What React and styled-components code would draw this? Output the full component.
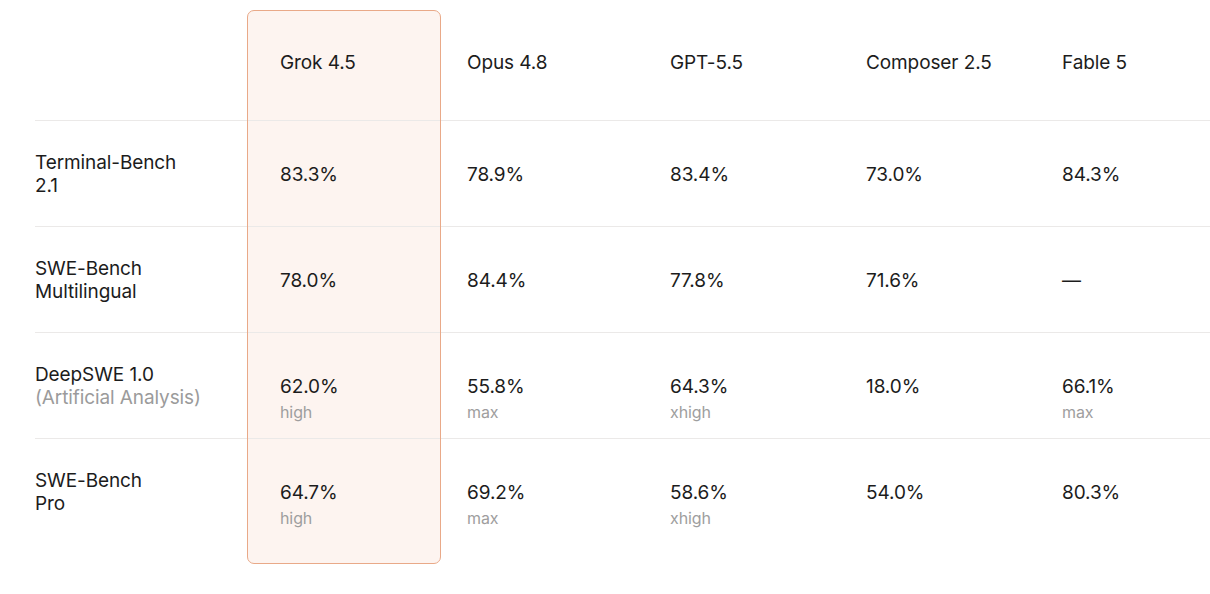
import React from 'react';
import styled, { createGlobalStyle } from 'styled-components';

const GlobalStyle = createGlobalStyle`
  body {
    margin: 0;
    padding: 0;
    background: #ffffff;
    font-family: Inter, 'Noto Sans', sans-serif;
    color: #1c1c1c;
  }
  * { box-sizing: border-box; }
`;

// --- Layout ---
const Table = styled.div`
  display: flex;
  align-items: flex-start;
  padding-left: 35px;
  width: 1210px;
`;

const Column = styled.div`
  display: flex;
  flex-direction: column;
  width: ${p => p.$width}px;
  flex-shrink: 0;
`;

const HighlightColumn = styled(Column)`
  margin-top: 10px;
  padding-bottom: 18px;
  background: #fdf4f0;
  border: 1px solid #e9a988;
  border-radius: 7px;
`;

const HeaderCell = styled.div`
  height: ${p => (p.$highlight ? 110 : 121)}px;
  padding-top: ${p => (p.$highlight ? 40 : 51)}px;
  padding-left: ${p => p.$pad}px;
  border-bottom: 1px solid #ebe9e8;
  font-size: 19px;
  line-height: 23px;
  letter-spacing: -0.1px;
`;

const BodyCell = styled.div`
  height: 106px;
  padding-top: ${p => (p.$label ? 30 : 42)}px;
  padding-left: ${p => p.$pad}px;
  border-bottom: ${p => (p.$last ? 'none' : '1px solid #ebe9e8')};
  font-size: 19px;
  line-height: 23px;
  letter-spacing: -0.1px;
`;

const Note = styled.div`
  color: #9b9b9b;
`;

const Effort = styled.div`
  margin-top: 4px;
  font-size: 16px;
  line-height: 20px;
  color: #9e9e9e;
`;

// --- Data ---
const BENCHMARKS = [
  { name: 'Terminal-Bench', second: '2.1' },
  { name: 'SWE-Bench', second: 'Multilingual' },
  { name: 'DeepSWE 1.0', note: '(Artificial Analysis)' },
  { name: 'SWE-Bench', second: 'Pro' },
];

const MODELS = [
  {
    name: 'Grok 4.5', width: 194, pad: 32, highlight: true,
    scores: [['83.3%'], ['78.0%'], ['62.0%', 'high'], ['64.7%', 'high']],
  },
  {
    name: 'Opus 4.8', width: 203, pad: 26,
    scores: [['78.9%'], ['84.4%'], ['55.8%', 'max'], ['69.2%', 'max']],
  },
  {
    name: 'GPT-5.5', width: 196, pad: 26,
    scores: [['83.4%'], ['77.8%'], ['64.3%', 'xhigh'], ['58.6%', 'xhigh']],
  },
  {
    name: 'Composer 2.5', width: 196, pad: 26,
    scores: [['73.0%'], ['71.6%'], ['18.0%'], ['54.0%']],
  },
  {
    name: 'Fable 5', width: 174, pad: 26,
    scores: [['84.3%'], ['—'], ['66.1%', 'max'], ['80.3%']],
  },
];

function ModelColumn({ model }) {
  const Wrapper = model.highlight ? HighlightColumn : Column;
  return (
    <Wrapper $width={model.width}>
      <HeaderCell $highlight={model.highlight} $pad={model.pad}>{model.name}</HeaderCell>
      {model.scores.map(([value, effort], i) => (
        <BodyCell key={i} $pad={model.pad} $last={i === model.scores.length - 1}>
          <div>{value}</div>
          {effort && <Effort>{effort}</Effort>}
        </BodyCell>
      ))}
    </Wrapper>
  );
}

export default function App() {
  return (
    <>
      <GlobalStyle />
      <Table>
        <Column $width={212}>
          <HeaderCell $pad={0} />
          {BENCHMARKS.map((b, i) => (
            <BodyCell key={i} $label $pad={0} $last={i === BENCHMARKS.length - 1}>
              <div>{b.name}</div>
              {b.second && <div>{b.second}</div>}
              {b.note && <Note>{b.note}</Note>}
            </BodyCell>
          ))}
        </Column>
        {MODELS.map(m => <ModelColumn key={m.name} model={m} />)}
      </Table>
    </>
  );
}
